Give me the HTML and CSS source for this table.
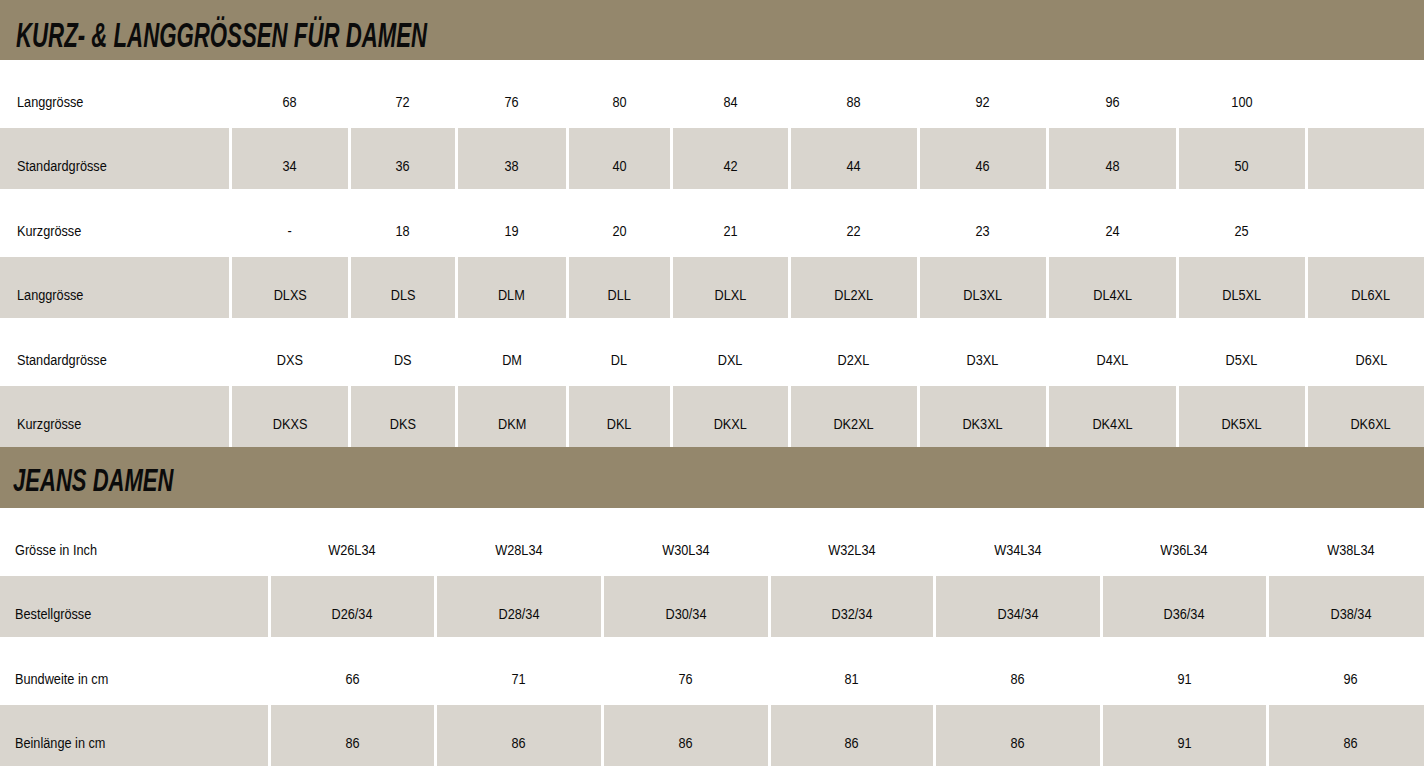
FILE: index.html
```html
<!DOCTYPE html>
<html lang="de">
<head>
<meta charset="utf-8">
<title>Größentabelle Damen</title>
<link rel="stylesheet" href="styles.css">
</head>
<body>
<section class="block">
  <header class="bar bar-one"><h2 class="title title-one"><span>KURZ- &amp; LANGGRÖSSEN FÜR DAMEN</span></h2></header>
  <div class="grid grid-one">
    <div class="cell label"><span>Langgrösse</span></div><div class="cell"><span>68</span></div><div class="cell"><span>72</span></div><div class="cell"><span>76</span></div><div class="cell"><span>80</span></div><div class="cell"><span>84</span></div><div class="cell"><span>88</span></div><div class="cell"><span>92</span></div><div class="cell"><span>96</span></div><div class="cell"><span>100</span></div><div class="cell"></div>
    <div class="cell label shade"><span>Standardgrösse</span></div><div class="cell shade"><span>34</span></div><div class="cell shade"><span>36</span></div><div class="cell shade"><span>38</span></div><div class="cell shade"><span>40</span></div><div class="cell shade"><span>42</span></div><div class="cell shade"><span>44</span></div><div class="cell shade"><span>46</span></div><div class="cell shade"><span>48</span></div><div class="cell shade"><span>50</span></div><div class="cell shade"></div>
    <div class="cell label"><span>Kurzgrösse</span></div><div class="cell"><span>-</span></div><div class="cell"><span>18</span></div><div class="cell"><span>19</span></div><div class="cell"><span>20</span></div><div class="cell"><span>21</span></div><div class="cell"><span>22</span></div><div class="cell"><span>23</span></div><div class="cell"><span>24</span></div><div class="cell"><span>25</span></div><div class="cell"></div>
    <div class="cell label shade"><span>Langgrösse</span></div><div class="cell shade"><span>DLXS</span></div><div class="cell shade"><span>DLS</span></div><div class="cell shade"><span>DLM</span></div><div class="cell shade"><span>DLL</span></div><div class="cell shade"><span>DLXL</span></div><div class="cell shade"><span>DL2XL</span></div><div class="cell shade"><span>DL3XL</span></div><div class="cell shade"><span>DL4XL</span></div><div class="cell shade"><span>DL5XL</span></div><div class="cell shade"><span>DL6XL</span></div>
    <div class="cell label"><span>Standardgrösse</span></div><div class="cell"><span>DXS</span></div><div class="cell"><span>DS</span></div><div class="cell"><span>DM</span></div><div class="cell"><span>DL</span></div><div class="cell"><span>DXL</span></div><div class="cell"><span>D2XL</span></div><div class="cell"><span>D3XL</span></div><div class="cell"><span>D4XL</span></div><div class="cell"><span>D5XL</span></div><div class="cell"><span>D6XL</span></div>
    <div class="cell label shade"><span>Kurzgrösse</span></div><div class="cell shade"><span>DKXS</span></div><div class="cell shade"><span>DKS</span></div><div class="cell shade"><span>DKM</span></div><div class="cell shade"><span>DKL</span></div><div class="cell shade"><span>DKXL</span></div><div class="cell shade"><span>DK2XL</span></div><div class="cell shade"><span>DK3XL</span></div><div class="cell shade"><span>DK4XL</span></div><div class="cell shade"><span>DK5XL</span></div><div class="cell shade"><span>DK6XL</span></div>
  </div>
</section>
<section class="block">
  <header class="bar bar-two"><h2 class="title title-two"><span>JEANS DAMEN</span></h2></header>
  <div class="grid grid-two">
    <div class="cell label"><span>Grösse in Inch</span></div><div class="cell"><span>W26L34</span></div><div class="cell"><span>W28L34</span></div><div class="cell"><span>W30L34</span></div><div class="cell"><span>W32L34</span></div><div class="cell"><span>W34L34</span></div><div class="cell"><span>W36L34</span></div><div class="cell"><span>W38L34</span></div>
    <div class="cell label shade"><span>Bestellgrösse</span></div><div class="cell shade"><span>D26/34</span></div><div class="cell shade"><span>D28/34</span></div><div class="cell shade"><span>D30/34</span></div><div class="cell shade"><span>D32/34</span></div><div class="cell shade"><span>D34/34</span></div><div class="cell shade"><span>D36/34</span></div><div class="cell shade"><span>D38/34</span></div>
    <div class="cell label"><span>Bundweite in cm</span></div><div class="cell"><span>66</span></div><div class="cell"><span>71</span></div><div class="cell"><span>76</span></div><div class="cell"><span>81</span></div><div class="cell"><span>86</span></div><div class="cell"><span>91</span></div><div class="cell"><span>96</span></div>
    <div class="cell label shade"><span>Beinlänge in cm</span></div><div class="cell shade"><span>86</span></div><div class="cell shade"><span>86</span></div><div class="cell shade"><span>86</span></div><div class="cell shade"><span>86</span></div><div class="cell shade"><span>86</span></div><div class="cell shade"><span>91</span></div><div class="cell shade"><span>86</span></div>
  </div>
</section>
</body>
</html>
```
FILE: styles.css
```css
html, body {
  margin: 0;
  padding: 0;
  background: #ffffff;
}

body {
  width: 1424px;
  overflow: hidden;
  font-family: "Liberation Sans", Arial, sans-serif;
  color: #0a0a0a;
}

.block {
  display: flex;
  flex-direction: column;
  overflow: hidden;
}

.bar {
  background: #94876c;
  display: flex;
  align-items: flex-start;
}

.bar-one {
  height: 60px;
  padding: 15px 0 0 16px;
  box-sizing: border-box;
}

.bar-two {
  height: 61px;
  padding: 15px 0 0 13px;
  box-sizing: border-box;
}

.title {
  margin: 0;
  font-family: "Liberation Sans", Arial, sans-serif;
  font-weight: bold;
  font-style: italic;
  color: #0b0b0b;
  white-space: nowrap;
}

.title span {
  display: inline-block;
  transform-origin: left center;
}

.title-one {
  font-size: 35px;
  line-height: 40px;
}

.title-one span {
  transform: scaleX(0.635);
}

.title-two {
  font-size: 31.5px;
  line-height: 36px;
}

.title-two span {
  transform: scaleX(0.70);
}

.grid {
  display: grid;
  gap: 3.5px;
  grid-auto-rows: 61px;
  padding-top: 3.5px;
}

.grid-one {
  grid-template-columns: 228.5px 115.5px 103.5px 107.5px 100.5px 114.5px 125.5px 125.5px 126.5px 125.5px 126px;
}

.grid-two {
  grid-template-columns: 267.5px 162.5px 163.5px 163.5px 161.5px 163.5px 162.5px 163.5px;
}

.cell {
  font-size: 15.5px;
  line-height: 18px;
  padding-top: 29px;
  box-sizing: border-box;
  text-align: center;
  white-space: nowrap;
}

.cell span {
  display: inline-block;
  transform: scaleX(0.82);
  transform-origin: center center;
}

.shade {
  background: #d9d5ce;
}

.label {
  text-align: left;
}

.label span {
  transform-origin: left center;
}

.grid-one .label {
  padding-left: 17px;
}

.grid-two .label {
  padding-left: 15px;
}
```
